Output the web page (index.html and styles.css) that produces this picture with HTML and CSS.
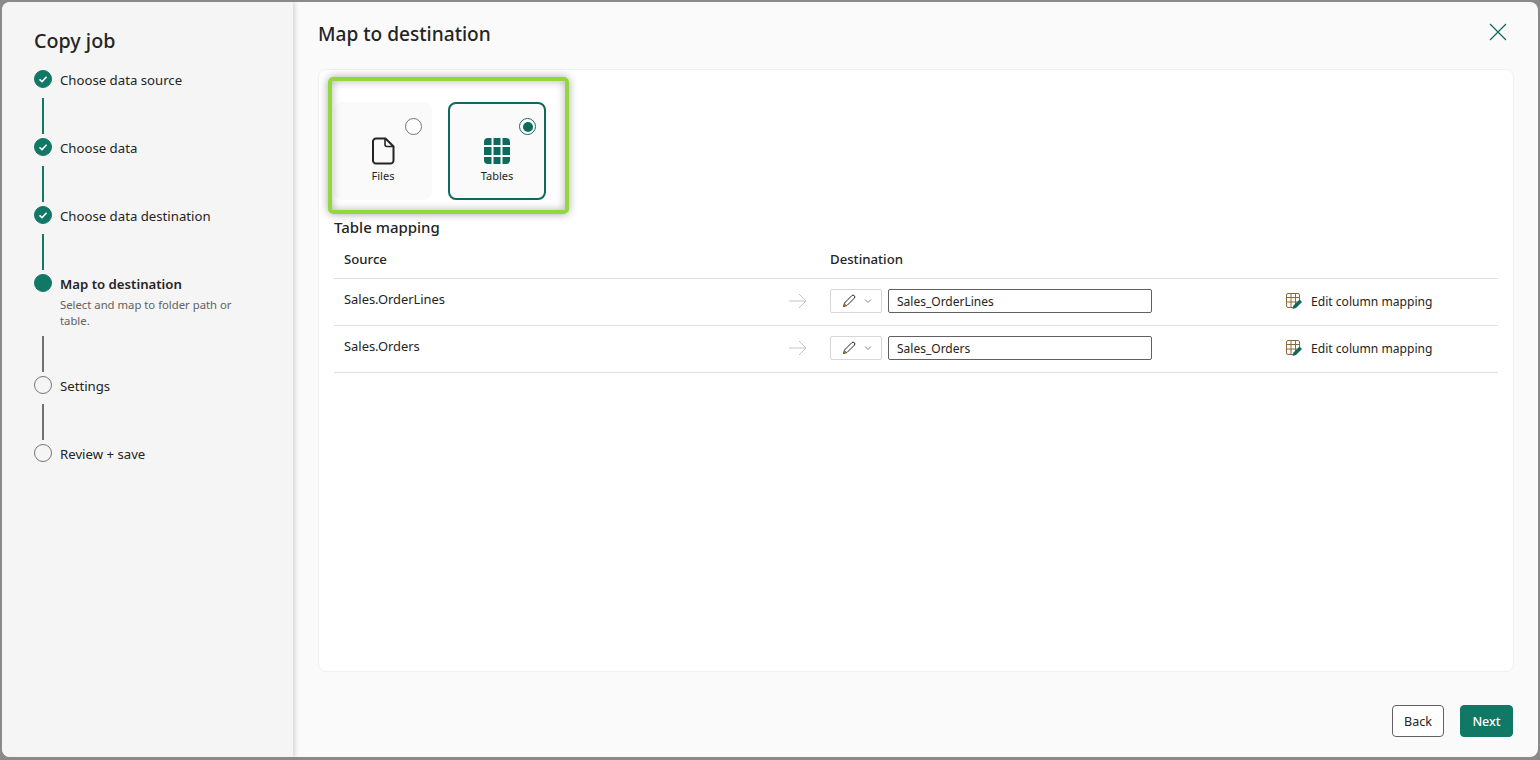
FILE: index.html
```html
<!DOCTYPE html>
<html lang="en">

<head>
  <meta charset="UTF-8" />
  <meta name="viewport" content="width=device-width, initial-scale=1.0" />
  <title>Copy job</title>
  <link rel="stylesheet" href="styles.css">
</head>

<body>
  <div class="dialog">

    <aside class="sidebar">
      <h2 class="sidebar-title">Copy job</h2>
      <ul class="steps">
        <li class="step done">
          <span class="step-dot">
            <svg viewBox="0 0 10 10" width="10" height="10"><path d="M1.500 5.400 4 7.600 8.600 2.800" fill="none" stroke="#fff" stroke-width="1.500" /></svg>
          </span>
          <span class="step-label">Choose data source</span>
        </li>
        <li class="step-line done"></li>
        <li class="step done">
          <span class="step-dot">
            <svg viewBox="0 0 10 10" width="10" height="10"><path d="M1.500 5.400 4 7.600 8.600 2.800" fill="none" stroke="#fff" stroke-width="1.500" /></svg>
          </span>
          <span class="step-label">Choose data</span>
        </li>
        <li class="step-line done"></li>
        <li class="step done">
          <span class="step-dot">
            <svg viewBox="0 0 10 10" width="10" height="10"><path d="M1.500 5.400 4 7.600 8.600 2.800" fill="none" stroke="#fff" stroke-width="1.500" /></svg>
          </span>
          <span class="step-label">Choose data destination</span>
        </li>
        <li class="step-line done"></li>
        <li class="step current">
          <span class="step-dot"></span>
          <div>
            <span class="step-label">Map to destination</span>
            <p class="step-desc">Select and map to folder path or table.</p>
          </div>
        </li>
        <li class="step-line"></li>
        <li class="step">
          <span class="step-dot"></span>
          <span class="step-label">Settings</span>
        </li>
        <li class="step-line"></li>
        <li class="step">
          <span class="step-dot"></span>
          <span class="step-label">Review + save</span>
        </li>
      </ul>
    </aside>

    <main class="main">
      <header class="main-header">
        <h1>Map to destination</h1>
        <svg class="close" viewBox="0 0 18 18" width="18" height="18"><path d="M1 1 17 17M17 1 1 17" fill="none" stroke="#0f6a5e" stroke-width="1.200" /></svg>
      </header>

      <section class="card">
        <div class="type-picker">
          <div class="type-option">
            <span class="radio"></span>
            <svg viewBox="0 0 24 28" width="24" height="28"><path d="M5 1.500h9.500L22.500 9.500V23.500a3 3 0 0 1-3 3H5a3 3 0 0 1-3-3V4.500a3 3 0 0 1 3-3Z" fill="none" stroke="#242424" stroke-width="2" /><path d="M14 2v5.500a2 2 0 0 0 2 2h6" fill="none" stroke="#242424" stroke-width="1.600" /></svg>
            <span class="type-name">Files</span>
          </div>
          <div class="type-option selected">
            <span class="radio"></span>
            <svg viewBox="0 0 28 28" width="28" height="28">
              <path d="M5 1h3.500v7H1V5a4 4 0 0 1 4-4Z" />
              <rect x="10.500" y="1" width="7" height="7" />
              <path d="M19.500 1H23a4 4 0 0 1 4 4v3h-7.500Z" />
              <rect x="1" y="10" width="7.500" height="8" />
              <rect x="10.500" y="10" width="7" height="8" />
              <rect x="19.500" y="10" width="7.500" height="8" />
              <path d="M1 20h7.500v7H5a4 4 0 0 1-4-4Z" />
              <rect x="10.500" y="20" width="7" height="7" />
              <path d="M19.500 20H27v3a4 4 0 0 1-4 4h-3.500Z" />
            </svg>
            <span class="type-name">Tables</span>
          </div>
          <div class="highlight"></div>
        </div>

        <h3 class="section-title">Table mapping</h3>

        <div class="map-row map-head">
          <div class="col-source">Source</div>
          <div class="col-arrow"></div>
          <div class="col-dest">Destination</div>
        </div>

        <div class="map-row">
          <div class="col-source">Sales.OrderLines</div>
          <div class="col-arrow">
            <svg viewBox="0 0 18 16" width="18" height="16"><path d="M0 8h17M10 1l7 7-7 7" fill="none" stroke="#c4c4c4" stroke-width="1" /></svg>
          </div>
          <div class="col-dest">
            <div class="mode-select">
              <svg viewBox="0 0 14 14" width="14" height="14"><path d="M1.500 12.500 2.500 9 9.800 1.700a1.500 1.500 0 0 1 2.500 2.500L5 11.500Z" fill="none" stroke="#242424" stroke-width="1" /><path d="M1.500 12.500 2.500 9 5 11.500Z" fill="#a8743a" /></svg>
              <svg viewBox="0 0 8 8" width="8" height="8"><path d="M1 2.500 4 5.500 7 2.500" fill="none" stroke="#888" stroke-width="1" /></svg>
            </div>
            <div class="name-input">Sales_OrderLines</div>
          </div>
          <div class="col-action">
            <svg viewBox="0 0 18 18" width="18" height="18">
              <path d="M3 1.500h10a1.500 1.500 0 0 1 1.500 1.500v6L8 15.500H3A1.500 1.500 0 0 1 1.500 14V3A1.500 1.500 0 0 1 3 1.500ZM1.500 5.500h13M1.500 10h11M6 1.500v14M10.500 1.500V12" fill="none" stroke="#8a6a3c" stroke-width="1" />
              <path d="M7.500 17 8.500 13.500 14.500 7.500 17 10 11 16Z" fill="#0f6a5e" />
            </svg>
            <span>Edit column mapping</span>
          </div>
        </div>

        <div class="map-row">
          <div class="col-source">Sales.Orders</div>
          <div class="col-arrow">
            <svg viewBox="0 0 18 16" width="18" height="16"><path d="M0 8h17M10 1l7 7-7 7" fill="none" stroke="#c4c4c4" stroke-width="1" /></svg>
          </div>
          <div class="col-dest">
            <div class="mode-select">
              <svg viewBox="0 0 14 14" width="14" height="14"><path d="M1.500 12.500 2.500 9 9.800 1.700a1.500 1.500 0 0 1 2.500 2.500L5 11.500Z" fill="none" stroke="#242424" stroke-width="1" /><path d="M1.500 12.500 2.500 9 5 11.500Z" fill="#a8743a" /></svg>
              <svg viewBox="0 0 8 8" width="8" height="8"><path d="M1 2.500 4 5.500 7 2.500" fill="none" stroke="#888" stroke-width="1" /></svg>
            </div>
            <div class="name-input">Sales_Orders</div>
          </div>
          <div class="col-action">
            <svg viewBox="0 0 18 18" width="18" height="18">
              <path d="M3 1.500h10a1.500 1.500 0 0 1 1.500 1.500v6L8 15.500H3A1.500 1.500 0 0 1 1.500 14V3A1.500 1.500 0 0 1 3 1.500ZM1.500 5.500h13M1.500 10h11M6 1.500v14M10.500 1.500V12" fill="none" stroke="#8a6a3c" stroke-width="1" />
              <path d="M7.500 17 8.500 13.500 14.500 7.500 17 10 11 16Z" fill="#0f6a5e" />
            </svg>
            <span>Edit column mapping</span>
          </div>
        </div>
      </section>

      <footer class="main-footer">
        <button class="btn">Back</button>
        <button class="btn primary">Next</button>
      </footer>
    </main>
  </div>
</body>

</html>
```

FILE: styles.css
```css
* {
  box-sizing: border-box;
}

html,
body {
  height: 100%;
}

body {
  margin: 0;
  padding: 2px;
  overflow: hidden;
  background: #8a8a8a;
  color: #242424;
  font-family: "Noto Sans", "Open Sans", sans-serif;
  font-size: 13.2px;
}

.dialog {
  display: flex;
  height: 755px;
  background: #fafafa;
  border-radius: 8px;
  overflow: hidden;
}

/* sidebar */
.sidebar {
  width: 291px;
  flex-shrink: 0;
  padding: 26px 32px 0;
  background: #f5f5f5;
  box-shadow: 2px 0 4px rgba(0, 0, 0, 0.15);
  position: relative;
}

.sidebar-title {
  margin: 0 0 16px;
  font-size: 19.7px;
  line-height: 26px;
  font-weight: 500;
}

.steps {
  margin: 0;
  padding: 0;
  list-style: none;
}

.step {
  display: flex;
  gap: 8px;
  min-height: 18px;
}

.step-dot {
  width: 18px;
  height: 18px;
  flex-shrink: 0;
  border: 1px solid #757575;
  border-radius: 50%;
  display: flex;
  align-items: center;
  justify-content: center;
}

.step.done .step-dot,
.step.current .step-dot {
  background: #117865;
  border-color: #117865;
}

.step-label {
  display: block;
  padding-top: 1px;
  margin-bottom: -1px;
  line-height: 18px;
}

.step.current .step-label {
  font-weight: 600;
}

.step-desc {
  width: 185px;
  margin: 5px 0 0;
  color: #616161;
  font-size: 11.3px;
  line-height: 16px;
}

.step-line {
  width: 2px;
  height: 36px;
  margin: 10px 0 4px 8px;
  background: #707070;
}

.step-line.done {
  background: #117865;
}

.step.current + .step-line {
  margin-top: 7px;
}

/* main */
.main {
  flex: 1;
  min-width: 0;
  padding: 0 24px 20px 25px;
  display: flex;
  flex-direction: column;
}

.main-header {
  height: 67px;
  flex-shrink: 0;
  display: flex;
  align-items: center;
  justify-content: space-between;
  padding-bottom: 4px;
}

.main-header h1 {
  margin: 0;
  font-size: 19.1px;
  font-weight: 500;
}

.close {
  margin: 0 7px 4px 0;
}

.card {
  height: 603px;
  padding: 32px 15px 0;
  background: #fff;
  border: 1px solid #f0f0f0;
  border-radius: 8px;
}

.type-picker {
  display: flex;
  gap: 16px;
  position: relative;
}

.type-option {
  width: 98px;
  height: 98px;
  padding-top: 35px;
  border-radius: 8px;
  background: #fafafa;
  display: flex;
  flex-direction: column;
  align-items: center;
  position: relative;
}

.type-option.selected {
  border: 2px solid #0f6a5e;
  padding-top: 33px;
}

.type-option.selected svg {
  fill: #0f6a5e;
}

.type-name {
  margin-top: 3px;
  font-size: 11px;
  line-height: 16px;
}

.radio {
  width: 17px;
  height: 17px;
  border: 1px solid #757575;
  border-radius: 50%;
  background: #fff;
  position: absolute;
  top: 16px;
  right: 10px;
}

.type-option.selected .radio {
  top: 14px;
  right: 8px;
  border-color: #0f6a5e;
}

.type-option.selected .radio::after {
  content: "";
  position: absolute;
  top: 2.500px;
  left: 2.500px;
  width: 10px;
  height: 10px;
  border-radius: 50%;
  background: #0f6a5e;
}

/* annotation box on top of the picker */
.highlight {
  position: absolute;
  top: -25px;
  left: -6px;
  width: 241px;
  height: 137px;
  border: 4px solid #92d640;
  border-radius: 5px;
  box-shadow: 0 0 8px rgba(0, 0, 0, 0.35), inset 0 0 8px rgba(0, 0, 0, 0.3);
  pointer-events: none;
}

.section-title {
  margin: 17px 0 0;
  font-size: 15px;
  line-height: 20px;
  font-weight: 500;
}

.map-row {
  height: 47px;
  padding: 0 0 2px 10px;
  display: flex;
  align-items: center;
  border-bottom: 1px solid #e0e0e0;
}

.map-head {
  height: 42px;
  padding: 3px 0 0 10px;
  font-weight: 500;
}

.col-source {
  width: 445px;
  padding-bottom: 4px;
  font-size: 12.900px;
}

.map-head .col-source {
  padding-bottom: 0;
  font-size: inherit;
}

.col-arrow {
  width: 41px;
  display: flex;
}

.col-dest {
  width: 455px;
  display: flex;
  gap: 6px;
}

.mode-select {
  width: 52px;
  height: 24px;
  padding: 0 9px 0 11px;
  background: #fff;
  border: 1px solid #d6d6d6;
  border-radius: 2px;
  display: flex;
  align-items: center;
  justify-content: space-between;
}

.name-input {
  width: 264px;
  height: 24px;
  padding: 0 8px;
  line-height: 23px;
  border: 1px solid #616161;
  border-radius: 2px;
  font-size: 12px;
}

.col-action {
  display: flex;
  align-items: center;
  gap: 8px;
  font-size: 12.100px;
}

.main-footer {
  margin-top: auto;
  display: flex;
  justify-content: flex-end;
  gap: 16px;
}

.btn {
  width: 52px;
  height: 32px;
  padding: 0;
  appearance: none;
  background: #fff;
  border: 1px solid #616161;
  border-radius: 4px;
  color: #242424;
  font: inherit;
  font-size: 12.5px;
}

.btn.primary {
  width: 53px;
  margin-right: 1px;
  background: #117865;
  border-color: #117865;
  color: #fff;
  font-weight: 500;
}
```
